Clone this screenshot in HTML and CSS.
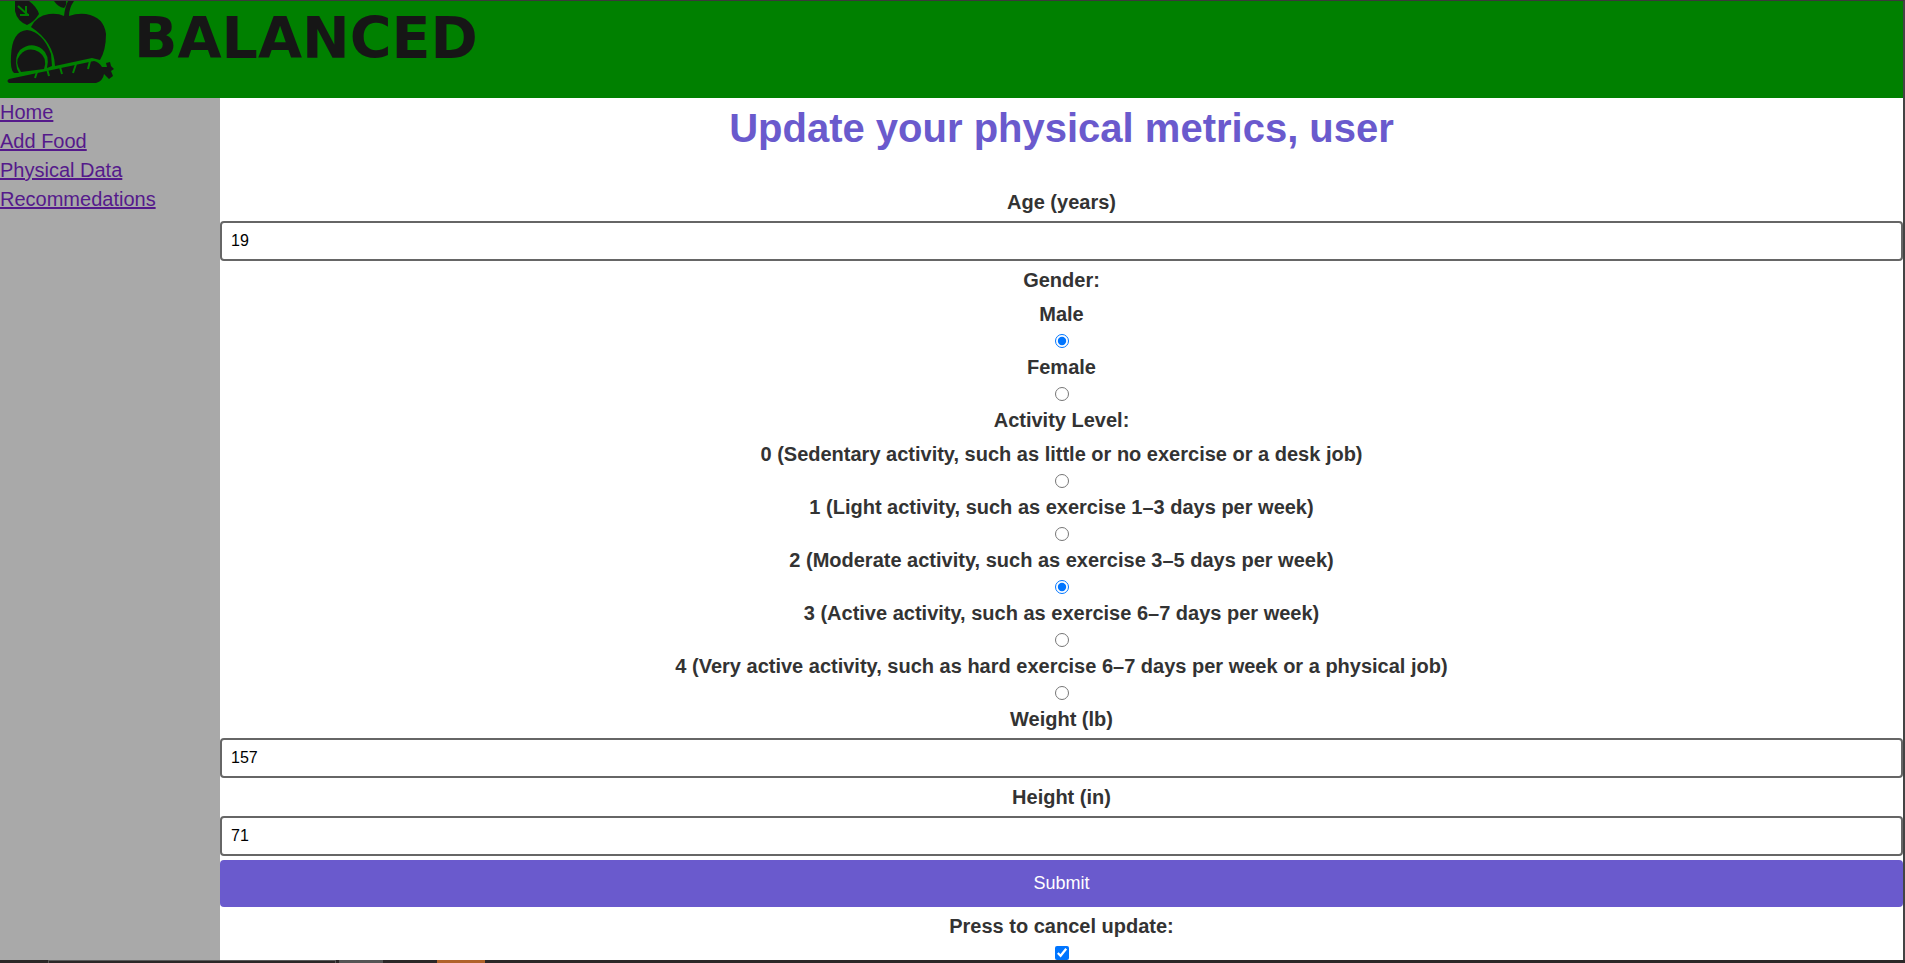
FILE: index.html
```html
<!DOCTYPE html>
<html lang="en">
<head>
<meta charset="utf-8">
<title>Balanced</title>
<link rel="stylesheet" href="styles.css">
</head>
<body>
<div class="window">
  <header class="banner">
    <svg class="logo" viewBox="0 0 118 86" width="118" height="86" aria-hidden="true">
      <g fill="#161616">
        <path d="M15 0H29Q37 6 39 13Q34 21 27 24Q17 20 15 10Z"/>
        <path d="M54 0H66Q67 4 64 7Q58 6 54 0Z"/>
        <path d="M68 0H74Q69 7 69 15Q77 12 86 13Q104 16 106 33Q106 49 100 59L92 57L55 65Q54 41 31 26Q36 15 49 13Q58 12 64 15Q65 6 68 0Z"/>
        <path d="M14 72Q10 69 11 55Q12 30 27 29Q43 31 51 53L52 65L47 67Q50 54 42 48Q31 40 20 49Q14 56 17 68L19 72Z"/>
        <path d="M21 71Q14 61 20 54Q28 45 39 51Q48 57 44 68Z"/>
        <path d="M9 78L94 60Q99 61 102 66L107 66L106 62L110 61L111 65L114 68L111 70L113 75L109 78L104 73Q103 80 96 82H9Q6 80 9 78Z"/>
      </g>
      <g fill="none" stroke="#008000" stroke-width="2">
        <path d="M18 5L28 14M26 5V13M20 14H29"/>
        <path d="M37 71L35 77M47 68L49 75M60 66L62 73M76 63L73 72M90 60L88 68"/>
      </g>
    </svg>
    <span class="wordmark">BALANCED</span>
  </header>
  <div class="page">
    <nav class="sidebar">
      <a href="#home">Home</a>
      <a href="#add-food">Add Food</a>
      <a href="#physical-data">Physical Data</a>
      <a href="#recommendations">Recommedations</a>
    </nav>
    <main class="content">
      <h1 class="title">Update your physical metrics, user</h1>
      <form class="form">
        <label for="age">Age (years)</label>
        <input class="field" id="age" type="text" value="19">
        <span class="caption">Gender:</span>
        <label for="male">Male</label>
        <input class="choice" id="male" type="radio" name="gender" checked>
        <label for="female">Female</label>
        <input class="choice" id="female" type="radio" name="gender">
        <span class="caption">Activity Level:</span>
        <label for="level0">0 (Sedentary activity, such as little or no exercise or a desk job)</label>
        <input class="choice" id="level0" type="radio" name="activity">
        <label for="level1">1 (Light activity, such as exercise 1–3 days per week)</label>
        <input class="choice" id="level1" type="radio" name="activity">
        <label for="level2">2 (Moderate activity, such as exercise 3–5 days per week)</label>
        <input class="choice" id="level2" type="radio" name="activity" checked>
        <label for="level3">3 (Active activity, such as exercise 6–7 days per week)</label>
        <input class="choice" id="level3" type="radio" name="activity">
        <label for="level4">4 (Very active activity, such as hard exercise 6–7 days per week or a physical job)</label>
        <input class="choice" id="level4" type="radio" name="activity">
        <label for="weight">Weight (lb)</label>
        <input class="field" id="weight" type="text" value="157">
        <label for="height">Height (in)</label>
        <input class="field" id="height" type="text" value="71">
        <button class="submit" type="button">Submit</button>
        <label for="cancel">Press to cancel update:</label>
        <input class="choice" id="cancel" type="checkbox" checked>
      </form>
    </main>
  </div>
</div>
<footer class="taskbar">
  <span class="task search"></span>
  <span class="task view"></span>
  <span class="task app"></span>
</footer>
</body>
</html>
```
FILE: styles.css
```css
* {
  box-sizing: border-box;
}

body {
  margin: 0;
  height: 100vh;
  display: flex;
  flex-direction: column;
  overflow: hidden;
  font: 20px/30px "Liberation Sans", Arial, sans-serif;
  color: #333;
  background: #fff;
}

.window {
  flex: 1;
  min-height: 0;
  display: flex;
  flex-direction: column;
  border-top: 1px solid #3a3a3a;
  border-right: 2px solid #444;
}

.banner {
  display: flex;
  align-items: flex-start;
  gap: 16px;
  padding-bottom: 11px;
  background: #008000;
}

.logo {
  flex: none;
}

.wordmark {
  font: bold 57px/74px "DejaVu Sans", sans-serif;
  color: #161616;
}

.page {
  flex: 1;
  min-height: 0;
  display: flex;
}

.sidebar {
  width: 220px;
  flex: none;
  display: flex;
  flex-direction: column;
  align-items: flex-start;
  line-height: 29px;
  background: #a9a9a9;
}

.sidebar a {
  color: #551a8b;
}

.content {
  flex: 1;
  text-align: center;
}

.title {
  margin: 0 0 29px;
  font-size: 40px;
  line-height: 60px;
  color: #6a5acd;
}

.form {
  display: grid;
  gap: 4px;
  justify-items: center;
  font-weight: bold;
}

.field {
  width: 100%;
  height: 40px;
  padding: 0 9px;
  border: 2px solid #666;
  border-radius: 4px;
  font: 16px "Liberation Sans", Arial, sans-serif;
  color: #000;
  background: #fff;
}

.choice {
  width: 14px;
  height: 14px;
  margin: 1px 0 0;
}

.submit {
  width: 100%;
  height: 47px;
  padding: 0;
  border: 0;
  border-radius: 4px;
  font: 18px "Liberation Sans", Arial, sans-serif;
  color: #fff;
  background: #6a5acd;
}

.taskbar {
  flex: none;
  display: flex;
  height: 3px;
  padding-left: 48px;
  background: #2b2727;
}

.search {
  width: 288px;
  margin-right: 3px;
  border: 1px solid #5a5a5a;
  border-bottom: 0;
}

.view {
  width: 44px;
  margin-right: 54px;
  background: #555;
}

.app {
  width: 48px;
  background: #b0622a;
}
```
